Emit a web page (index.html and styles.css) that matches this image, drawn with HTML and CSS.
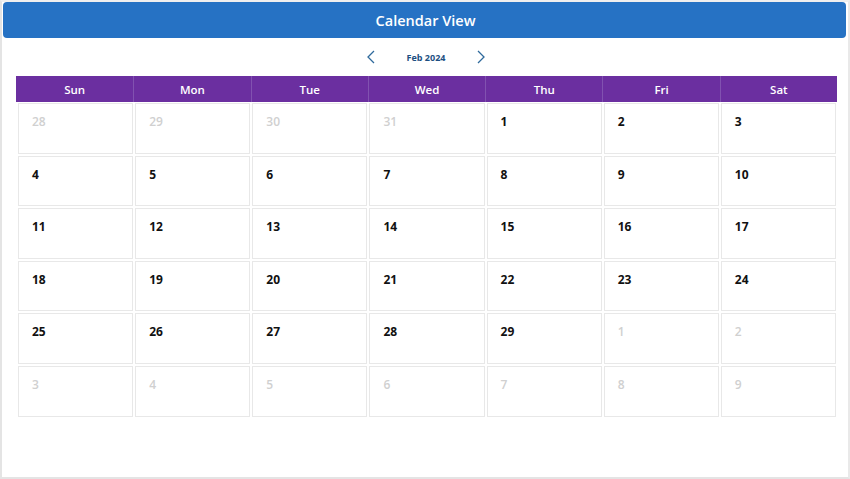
FILE: index.html
```html
<!DOCTYPE html>
<html lang="en">
<head>
    <meta charset="UTF-8">
    <meta name="viewport" content="width=device-width, initial-scale=1.0">
    <title>Calendar View</title>
    <link rel="stylesheet" href="styles.css">
</head>
<body>
    <div class="frame">
        <!-- Title bar -->
        <header class="titlebar">Calendar View</header>

        <!-- Month navigation -->
        <div class="month-nav">
            <button class="nav-btn" aria-label="Previous month">
                <svg width="8" height="14" viewBox="0 0 8 14"><path d="M7 1 L1 7 L7 13" fill="none" stroke="#2f6a9c" stroke-width="1.3"/></svg>
            </button>
            <span class="month-label">Feb 2024</span>
            <button class="nav-btn" aria-label="Next month">
                <svg width="8" height="14" viewBox="0 0 8 14"><path d="M1 1 L7 7 L1 13" fill="none" stroke="#2f6a9c" stroke-width="1.3"/></svg>
            </button>
        </div>

        <!-- Calendar -->
        <div class="calendar">
            <div class="weekdays">
                <div>Sun</div>
                <div>Mon</div>
                <div>Tue</div>
                <div>Wed</div>
                <div>Thu</div>
                <div>Fri</div>
                <div>Sat</div>
            </div>
            <div class="days">
                <div class="day muted">28</div>
                <div class="day muted">29</div>
                <div class="day muted">30</div>
                <div class="day muted">31</div>
                <div class="day">1</div>
                <div class="day">2</div>
                <div class="day">3</div>

                <div class="day">4</div>
                <div class="day">5</div>
                <div class="day">6</div>
                <div class="day">7</div>
                <div class="day">8</div>
                <div class="day">9</div>
                <div class="day">10</div>

                <div class="day">11</div>
                <div class="day">12</div>
                <div class="day">13</div>
                <div class="day">14</div>
                <div class="day">15</div>
                <div class="day">16</div>
                <div class="day">17</div>

                <div class="day">18</div>
                <div class="day">19</div>
                <div class="day">20</div>
                <div class="day">21</div>
                <div class="day">22</div>
                <div class="day">23</div>
                <div class="day">24</div>

                <div class="day">25</div>
                <div class="day">26</div>
                <div class="day">27</div>
                <div class="day">28</div>
                <div class="day">29</div>
                <div class="day muted">1</div>
                <div class="day muted">2</div>

                <div class="day muted">3</div>
                <div class="day muted">4</div>
                <div class="day muted">5</div>
                <div class="day muted">6</div>
                <div class="day muted">7</div>
                <div class="day muted">8</div>
                <div class="day muted">9</div>
            </div>
        </div>
    </div>
</body>
</html>
```

FILE: styles.css
```css
/* Reset & Global Styling */
* {
    margin: 0;
    padding: 0;
    box-sizing: border-box;
}
html, body {
    height: 100%;
}
body {
    font-family: "Open Sans", "Noto Sans", sans-serif;
    background-color: #fff;
    color: #111;
    overflow: hidden;
}

/* Outer frame */
.frame {
    height: 479px;
    border-left: 2px solid #e4e4e4;
    border-right: 2px solid #e9e9e9;
    border-bottom: 2px solid #e4e4e4;
    border-top: 2px solid #efefef;
    padding: 0 11px 0 14px;
}

/* Title bar */
.titlebar {
    height: 36px;
    margin: 0 -9px 0 -13px;
    background-color: #2672c4;
    border-radius: 4px;
    color: #fff;
    font-size: 14.5px;
    font-weight: 600;
    display: flex;
    align-items: center;
    justify-content: center;
    padding-left: 2px;
}

/* Month navigation */
.month-nav {
    height: 38px;
    display: flex;
    align-items: center;
    justify-content: center;
    gap: 31px;
    padding-right: 1px;
}
.nav-btn {
    background: none;
    border: none;
    width: 10px;
    height: 16px;
    display: flex;
    align-items: center;
    justify-content: center;
    cursor: pointer;
}
.month-label {
    font-size: 9px;
    font-weight: 700;
    color: #1d4f82;
}

/* Calendar */
.calendar {
    width: 821px;
}
.weekdays {
    display: grid;
    grid-template-columns: repeat(7, 1fr);
    background-color: #6b2fa0;
    height: 26px;
}
.weekdays div {
    color: #fff;
    font-size: 11.5px;
    font-weight: 600;
    display: flex;
    align-items: center;
    justify-content: center;
    border-left: 1px solid #8152b0;
}
.weekdays div:first-child {
    border-left: none;
}
.days {
    display: grid;
    grid-template-columns: repeat(7, 1fr);
    grid-auto-rows: 50.6px;
    gap: 2px;
    padding: 1px 1px 0 2px;
}
.day {
    border: 1px solid #e8e8e8;
    padding: 9px 0 0 13px;
    font-size: 12px;
    font-weight: 700;
    color: #111;
}
.day.muted {
    color: #d0d0d0;
    font-weight: 600;
}
```
